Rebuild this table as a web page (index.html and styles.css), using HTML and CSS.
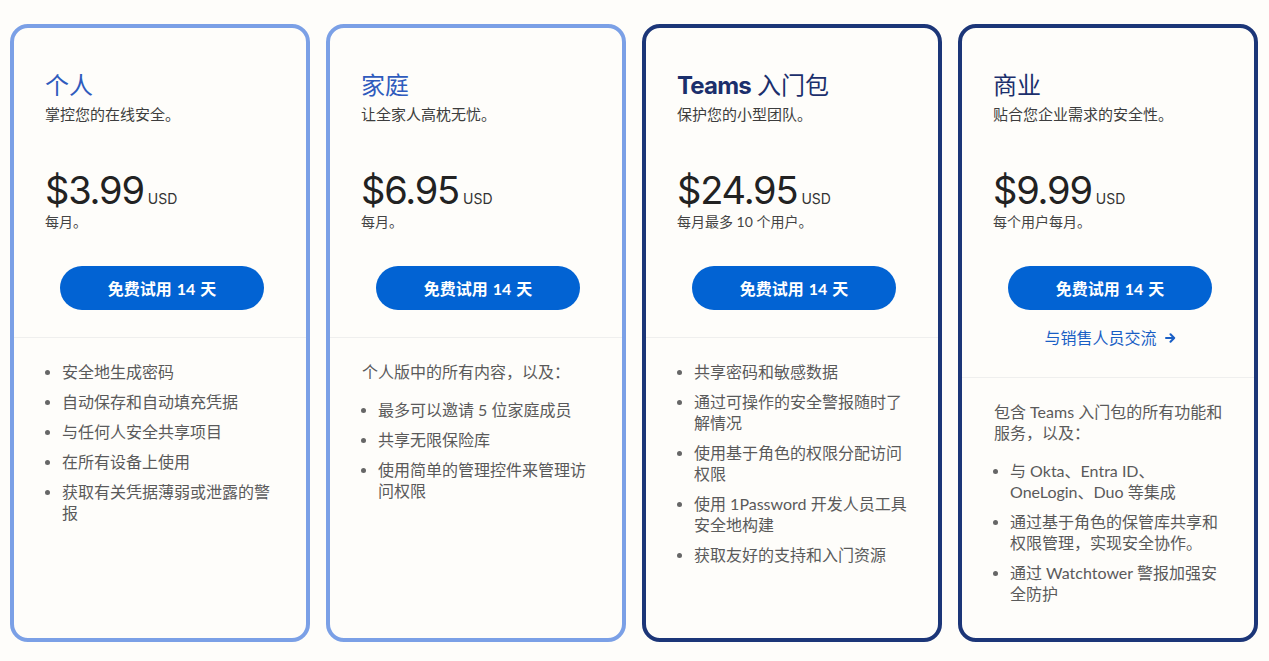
FILE: index.html
```html
<!DOCTYPE html>
<html lang="zh-CN">
<head>
<meta charset="utf-8">
<title>定价方案</title>
<link rel="stylesheet" href="styles.css">
</head>
<body>
<main class="plans">
  <section class="card card-light">
    <div class="card-top">
      <h2 class="plan-title title-light">个人</h2>
      <p class="plan-sub">掌控您的在线安全。</p>
      <div class="price"><span class="amount">$3.99</span><span class="currency">USD</span></div>
      <p class="period">每月。</p>
      <a class="cta" href="#">免费试用 <b>14</b> 天</a>
    </div>
    <div class="card-body">
      <ul class="features">
        <li>安全地生成密码</li>
        <li>自动保存和自动填充凭据</li>
        <li>与任何人安全共享项目</li>
        <li>在所有设备上使用</li>
        <li>获取有关凭据薄弱或泄露的警报</li>
      </ul>
    </div>
  </section>

  <section class="card card-light">
    <div class="card-top">
      <h2 class="plan-title title-light">家庭</h2>
      <p class="plan-sub">让全家人高枕无忧。</p>
      <div class="price"><span class="amount">$6.95</span><span class="currency">USD</span></div>
      <p class="period">每月。</p>
      <a class="cta" href="#">免费试用 <b>14</b> 天</a>
    </div>
    <div class="card-body">
      <p class="intro">个人版中的所有内容，以及：</p>
      <ul class="features">
        <li>最多可以邀请 5 位家庭成员</li>
        <li>共享无限保险库</li>
        <li>使用简单的管理控件来管理访问权限</li>
      </ul>
    </div>
  </section>

  <section class="card card-dark">
    <div class="card-top">
      <h2 class="plan-title title-dark"><span class="latin">Teams</span> 入门包</h2>
      <p class="plan-sub">保护您的小型团队。</p>
      <div class="price"><span class="amount">$24.95</span><span class="currency">USD</span></div>
      <p class="period">每月最多 10 个用户。</p>
      <a class="cta" href="#">免费试用 <b>14</b> 天</a>
    </div>
    <div class="card-body">
      <ul class="features">
        <li>共享密码和敏感数据</li>
        <li>通过可操作的安全警报随时了解情况</li>
        <li>使用基于角色的权限分配访问权限</li>
        <li>使用 1Password 开发人员工具安全地构建</li>
        <li>获取友好的支持和入门资源</li>
      </ul>
    </div>
  </section>

  <section class="card card-dark">
    <div class="card-top">
      <h2 class="plan-title title-dark">商业</h2>
      <p class="plan-sub">贴合您企业需求的安全性。</p>
      <div class="price"><span class="amount">$9.99</span><span class="currency">USD</span></div>
      <p class="period">每个用户每月。</p>
      <a class="cta" href="#">免费试用 <b>14</b> 天</a>
      <a class="sales" href="#">与销售人员交流
        <svg class="arrow" width="11" height="10" viewBox="0 0 11 10" aria-hidden="true"><path d="M1 5h8M5.5 1.3L9.2 5 5.5 8.7" fill="none" stroke="currentColor" stroke-width="2" stroke-linecap="round" stroke-linejoin="round"/></svg>
      </a>
    </div>
    <div class="card-body">
      <p class="intro">包含 Teams 入门包的所有功能和服务，以及：</p>
      <ul class="features">
        <li>与 Okta、Entra ID、OneLogin、Duo 等集成</li>
        <li>通过基于角色的保管库共享和权限管理，实现安全协作。</li>
        <li>通过 Watchtower 警报加强安全防护</li>
      </ul>
    </div>
  </section>
</main>
</body>
</html>
```

FILE: styles.css
```css
* {
  box-sizing: border-box;
}

html, body {
  margin: 0;
  padding: 0;
  background: #fefdfa;
}

body {
  font-family: Lato, "Noto Sans CJK SC", sans-serif;
  color: #3b3b3b;
}

.plans {
  display: flex;
  gap: 16px;
  padding: 24px 11px 20px 10px;
  align-items: stretch;
}

.card {
  width: 300px;
  flex: 0 0 300px;
  height: 618px;
  border: 4px solid #7ba0e6;
  border-radius: 18px;
  display: flex;
  flex-direction: column;
  background: #fefdfa;
}

.card-dark {
  border-color: #1c3678;
}

.card-top {
  display: flex;
  flex-direction: column;
  padding: 42px 32px 27px 31px;
  border-bottom: 1px solid #efefee;
}

.plan-title {
  margin: 0;
  height: 30px;
  font-size: 24px;
  line-height: 30px;
  font-weight: 400;
}

.title-light {
  color: #2f5bbd;
}

.title-dark {
  color: #1b2f6c;
}

.latin {
  font-family: Inter, "Noto Sans CJK SC", sans-serif;
  font-weight: 700;
  letter-spacing: -0.8px;
}

.plan-sub {
  margin: 4px 0 0;
  height: 20px;
  font-size: 15px;
  line-height: 20px;
  color: #3d3d3d;
}

.price {
  margin-top: 44px;
  display: flex;
  align-items: baseline;
  height: 44px;
  line-height: 44px;
}

.amount {
  font-family: Inter, sans-serif;
  font-size: 38px;
  font-weight: 400;
  color: #222;
  letter-spacing: -1.2px;
}

.currency {
  font-family: Inter, sans-serif;
  font-size: 14px;
  color: #333;
  margin-left: 4px;
}

.period {
  margin: 0;
  height: 20px;
  font-size: 14px;
  line-height: 20px;
  color: #444;
}

.cta {
  align-self: center;
  margin-top: 34px;
  margin-left: 5px;
  width: 204px;
  height: 44px;
  border-radius: 22px;
  background: #0263d3;
  color: #fff;
  text-decoration: none;
  font-size: 16px;
  font-weight: 600;
  display: flex;
  align-items: center;
  justify-content: center;
}

.cta b {
  font-weight: 700;
  margin: 0 5px;
}

.sales {
  align-self: center;
  margin: 18px 0 2px 5px;
  font-size: 16px;
  line-height: 20px;
  color: #1a5fc5;
  text-decoration: none;
  display: flex;
  align-items: center;
  gap: 8px;
}

.arrow {
  display: block;
}

.card-body {
  padding: 23px 22px 0 32px;
}

.intro {
  margin: 0 0 17px;
  font-size: 16px;
  line-height: 21px;
  color: #5a5a5a;
}

.features {
  margin: 0;
  padding-left: 16px;
  list-style: disc;
  color: #5a5a5a;
}

.features li {
  font-size: 16px;
  line-height: 21px;
  margin-bottom: 9px;
}

.features li::marker {
  color: #666;
  font-size: 15px;
}
```
